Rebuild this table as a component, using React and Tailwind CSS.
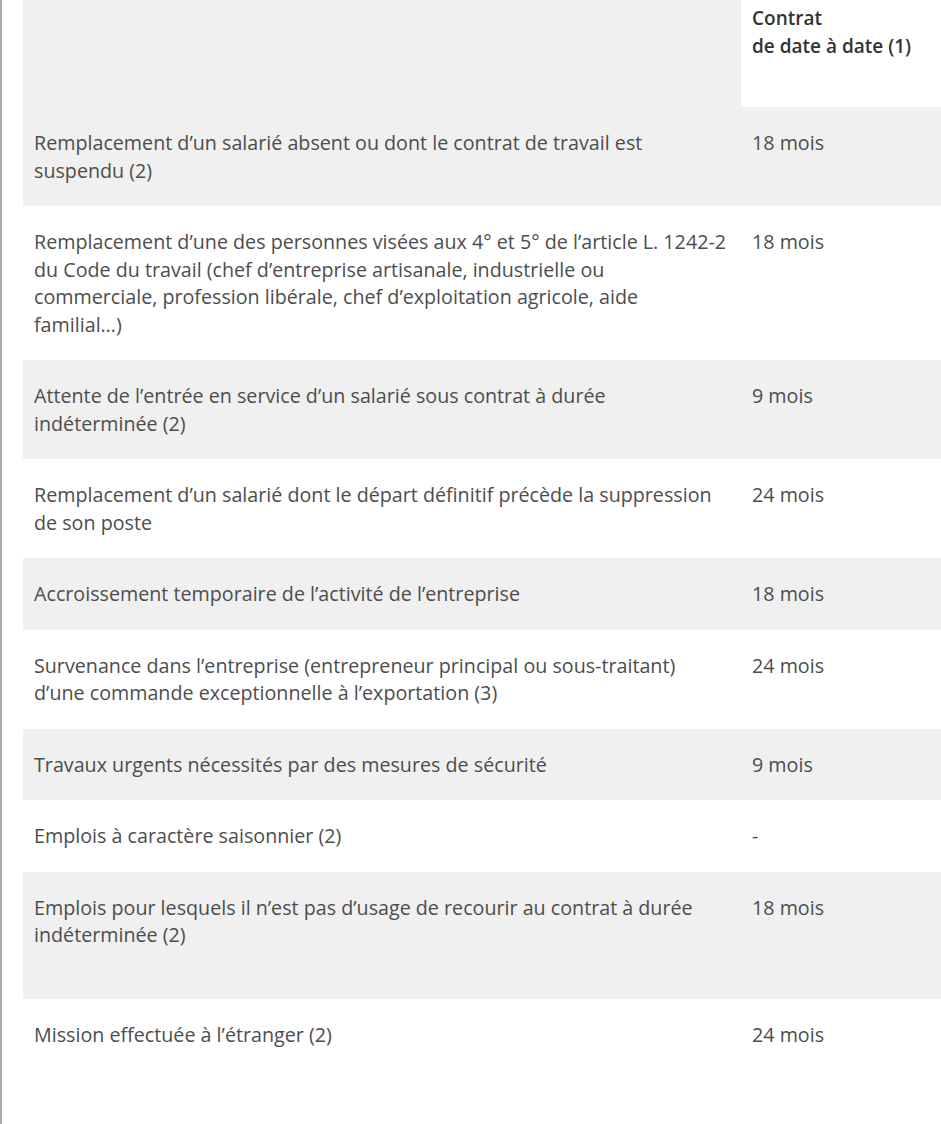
const rows = [
  { label: "Remplacement d’un salarié absent ou dont le contrat de travail est suspendu (2)", value: "18 mois" },
  {
    label:
      "Remplacement d’une des personnes visées aux 4° et 5° de l’article L. 1242-2 du Code du travail (chef d’entreprise artisanale, industrielle ou commerciale, profession libérale, chef d’exploitation agricole, aide familial…)",
    value: "18 mois",
  },
  { label: "Attente de l’entrée en service d’un salarié sous contrat à durée indéterminée (2)", value: "9 mois" },
  { label: "Remplacement d’un salarié dont le départ définitif précède la suppression de son poste", value: "24 mois" },
  { label: "Accroissement temporaire de l’activité de l’entreprise", value: "18 mois" },
  {
    label: "Survenance dans l’entreprise (entrepreneur principal ou sous-traitant) d’une commande exceptionnelle à l’exportation (3)",
    value: "24 mois",
  },
  { label: "Travaux urgents nécessités par des mesures de sécurité", value: "9 mois" },
  { label: "Emplois à caractère saisonnier (2)", value: "-" },
  { label: "Emplois pour lesquels il n’est pas d’usage de recourir au contrat à durée indéterminée (2)", value: "18 mois", extra: true },
  { label: "Mission effectuée à l’étranger (2)", value: "24 mois" },
];

export default function App() {
  return (
    <div className="min-h-[1124px] bg-white border-l-2 border-[#a9a9a9] pl-[21px] font-['Open_Sans',sans-serif] text-[19.7px] leading-[27.5px] text-[#4d4d4d]">
      <table className="w-[918px] border-collapse table-fixed">
        <colgroup>
          <col className="w-[718px]" />
          <col className="w-[200px]" />
        </colgroup>
        <thead>
          <tr className="h-[107px]">
            <th className="bg-[#f0f0f0]"></th>
            <th className="bg-white align-top text-left font-semibold text-[19px] text-[#333] px-[11px] pt-[5px]">
              Contrat
              <br />
              de date à date (1)
            </th>
          </tr>
        </thead>
        <tbody>
          {rows.map((row, i) => (
            <tr key={i} className={i % 2 === 0 ? "bg-[#f0f0f0]" : "bg-white"}>
              <td className={`align-top pl-[11px] pr-[11px] pt-[22px] ${row.extra ? "pb-[50px]" : "pb-[22px]"}`}>{row.label}</td>
              <td className="align-top px-[11px] pt-[22px] pb-[22px]">{row.value}</td>
            </tr>
          ))}
        </tbody>
      </table>
    </div>
  );
}
